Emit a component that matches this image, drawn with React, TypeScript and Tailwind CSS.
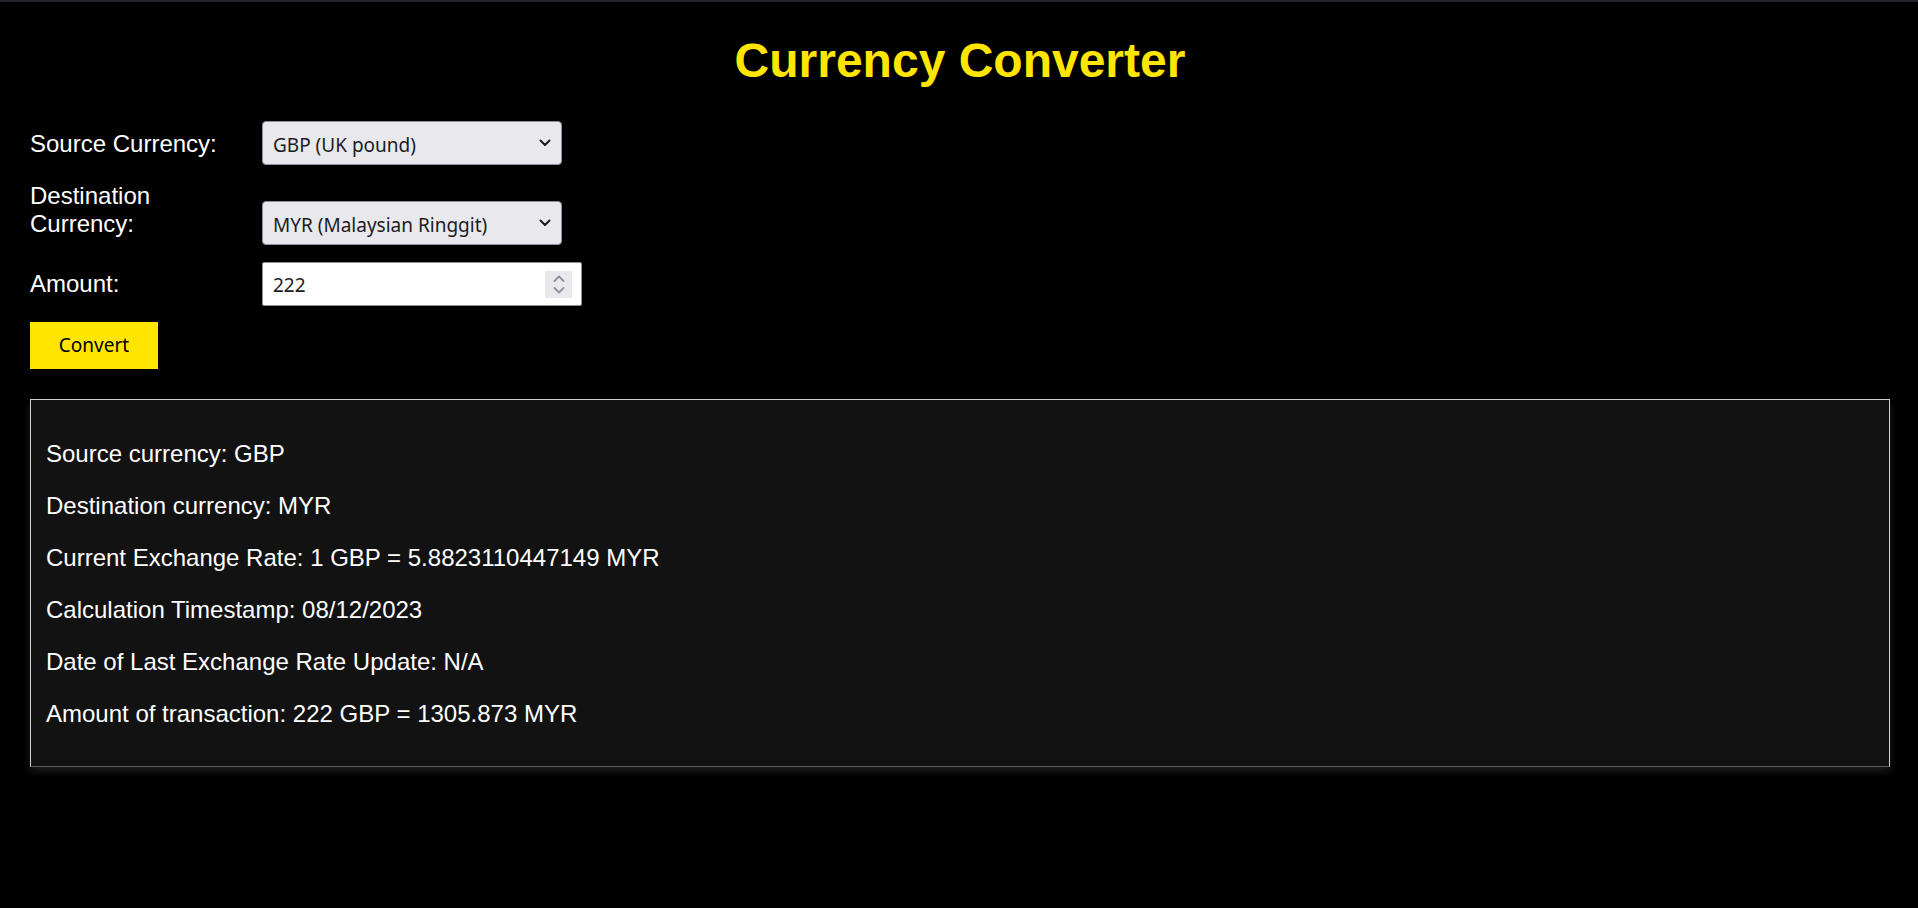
import { useState } from "react"

const currencies = [
  { code: "GBP", name: "UK pound" },
  { code: "MYR", name: "Malaysian Ringgit" },
  { code: "USD", name: "US Dollar" },
  { code: "EUR", name: "Euro" },
]

// rates against GBP
const rates: Record<string, number> = {
  GBP: 1,
  MYR: 5.8823110447149,
  USD: 1.2561,
  EUR: 1.1672,
}

function Chevron() {
  return (
    <svg className="pointer-events-none absolute right-[11px] top-1/2 -translate-y-1/2" width="12" height="8" viewBox="0 0 12 8">
      <path d="M1.5 1.5 L6 6 L10.5 1.5" fill="none" stroke="#1c1b22" strokeWidth="2" strokeLinecap="round" strokeLinejoin="round" />
    </svg>
  )
}

export default function App() {
  const [source, setSource] = useState("GBP")
  const [dest, setDest] = useState("MYR")
  const [amount, setAmount] = useState("222")
  const [result, setResult] = useState({ source: "GBP", dest: "MYR", amount: 222 })

  const rate = rates[result.dest] / rates[result.source]
  const converted = Math.round(result.amount * rate * 1000) / 1000

  const labelCls = "w-[200px] shrink-0 text-[24px] leading-[28px] text-white"
  const selectCls =
    "h-[44px] w-[300px] appearance-none rounded-[4px] border border-[#8f8f9d] bg-[#e9e9ed] pl-[10px] pr-8 pt-[5px] text-[19px] text-[#1c1b22] outline-none font-['Noto_Sans',sans-serif]"

  return (
    <div className="min-h-screen border-t-2 border-[#26242b] bg-black pl-[30px] pr-[28px] font-['Liberation_Sans',Arial,sans-serif]">
      <h1 className="mt-[31px] mb-[33px] text-center text-[48px] font-bold leading-[55px] text-[#ffe500]">
        Currency Converter
      </h1>

      {/* Form */}
      <div className="flex items-baseline-last gap-[32px]">
        <label className={labelCls}>Source Currency:</label>
        <div className="relative">
          <select value={source} onChange={(e) => setSource(e.target.value)} className={selectCls}>
            {currencies.map((c) => (
              <option key={c.code} value={c.code}>
                {c.code} ({c.name})
              </option>
            ))}
          </select>
          <Chevron />
        </div>
      </div>

      <div className="mt-[17px] flex items-baseline-last gap-[32px]">
        <label className={labelCls}>Destination Currency:</label>
        <div className="relative">
          <select value={dest} onChange={(e) => setDest(e.target.value)} className={selectCls}>
            {currencies.map((c) => (
              <option key={c.code} value={c.code}>
                {c.code} ({c.name})
              </option>
            ))}
          </select>
          <Chevron />
        </div>
      </div>

      <div className="mt-[17px] flex items-baseline-last gap-[32px]">
        <label className={labelCls}>Amount:</label>
        <div className="relative">
          <input
            type="number"
            value={amount}
            onChange={(e) => setAmount(e.target.value)}
            className="h-[44px] w-[320px] rounded-[2px] border border-[#8f8f9d] bg-white pl-[10px] pr-10 pt-[3px] text-[19px] text-[#1c1b22] outline-none font-['Noto_Sans',sans-serif] [appearance:textfield] [&::-webkit-inner-spin-button]:appearance-none [&::-webkit-outer-spin-button]:appearance-none"
          />
          <div className="pointer-events-none absolute right-[10px] top-[9px] flex h-[27px] w-[27px] flex-col items-center justify-center gap-[5px] bg-[#e9e9ed]">
            <svg width="12" height="7" viewBox="0 0 12 7">
              <path d="M1.5 6 L6 1.5 L10.5 6" fill="none" stroke="#8f8f9d" strokeWidth="1.8" strokeLinecap="round" strokeLinejoin="round" />
            </svg>
            <svg width="12" height="7" viewBox="0 0 12 7">
              <path d="M1.5 1 L6 5.5 L10.5 1" fill="none" stroke="#8f8f9d" strokeWidth="1.8" strokeLinecap="round" strokeLinejoin="round" />
            </svg>
          </div>
        </div>
      </div>

      <button
        onClick={() => setResult({ source, dest, amount: Number(amount) || 0 })}
        className="mt-[16px] flex h-[47px] w-[128px] items-center justify-center bg-[#ffe500] text-[19px] text-black font-['Noto_Sans',sans-serif]"
      >
        Convert
      </button>

      {/* Result */}
      <div className="mt-[30px] border border-[#cfcfcf] border-b-[#5a5a5a] bg-[#121212] px-[15px] pt-[16px] pb-[14px] text-[24px] leading-[28px] text-white shadow-[0_4px_8px_rgba(255,255,255,0.12)]">
        <p className="my-6">Source currency: {result.source}</p>
        <p className="my-6">Destination currency: {result.dest}</p>
        <p className="my-6">
          Current Exchange Rate: 1 {result.source} = {rate} {result.dest}
        </p>
        <p className="my-6">Calculation Timestamp: 08/12/2023</p>
        <p className="my-6">Date of Last Exchange Rate Update: N/A</p>
        <p className="my-6">
          Amount of transaction: {result.amount} {result.source} = {converted} {result.dest}
        </p>
      </div>
    </div>
  )
}
